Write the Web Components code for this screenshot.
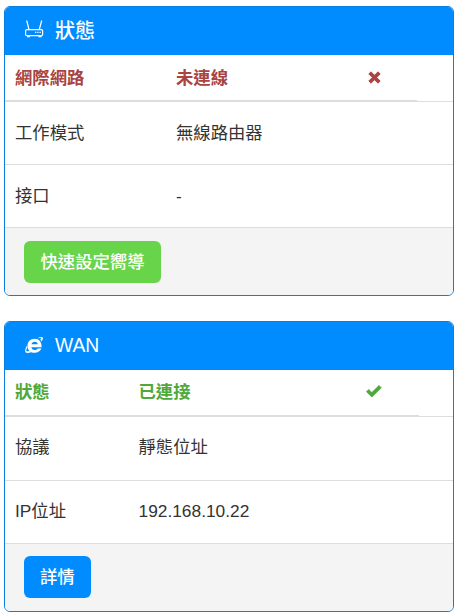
<!DOCTYPE html>
<html lang="zh-Hant">
<head>
<meta charset="utf-8">
<title>狀態</title>
<style>
body {
  margin: 0;
  padding: 6px 6px 0 4px;
  background: #fff;
  font-family: "Liberation Sans", "Noto Sans CJK TC", sans-serif;
  line-height: 20px;
  color: #333;
}
</style>
</head>
<body>
<status-panel heading="狀態" style="--heading-size:20px">
  <svg slot="icon" width="22" height="22" viewBox="0 0 22 22" fill="none" stroke="#fff" stroke-width="1.200">
    <path d="M2.700.5 5 9.500M17.700.5 15.300 9.500"/>
    <rect x="1.600" y="9.600" width="17" height="6" rx="1.200"/>
    <path d="M3 16.700h3M14.500 16.700h3"/>
    <path d="M11 12.400h1.300M13.300 12.400h1.300M15.500 12.400h1.300" stroke-width="1.400"/>
  </svg>
  <status-row label="網際網路" value="未連線" state="bad" first style="--col2:161px;--col3:192px;--line:412px"></status-row>
  <status-row label="工作模式" value="無線路由器" style="--col2:161px;--col3:192px;--lift:1px"></status-row>
  <status-row label="接口" value="-" style="--col2:161px;--col3:192px"></status-row>
  <action-button slot="footer" style="--btn:#67d44a;--pad:16.500px">快速設定嚮導</action-button>
</status-panel>
<status-panel heading="WAN" style="margin-top:25px;--heading-size:19.300px;--foot-top:12px;--foot-bottom:13px">
  <svg slot="icon" width="22" height="22" viewBox="0 0 22 22" fill="#fff">
    <path fill-rule="evenodd" d="M10.600 3.800c4.400 0 7 3 7 7.600v.9H7.400c.2 1.700 1.500 2.800 3.300 2.800 1.300 0 2.300-.5 2.900-1.500h3.800c-1 2.700-3.500 4.200-6.700 4.200-4.400 0-7.200-2.800-7.200-6.900 0-4.100 2.900-7.100 7.100-7.100zM7.500 9.300h6.300c-.2-1.600-1.400-2.600-3.100-2.600-1.700 0-2.900 1-3.200 2.600z"/>
    <path d="M13.500 3.200c2.500-1.300 4.600-1.600 5.300-.6.500.8 0 2.200-1.300 3.900-.3-.7-.7-1.300-1.200-1.800.6-.9.8-1.500.6-1.800-.3-.4-1.200-.2-2.300.3zM3 10.500c-1.600 2.900-2.300 5.500-1.500 6.800.9 1.300 3.500.9 6.500-.6-.9-.2-1.700-.5-2.400-1-1.700.7-2.800.8-3.200.3-.4-.6 0-1.800.9-3.200z"/>
  </svg>
  <status-row label="狀態" value="已連接" state="good" first style="--col2:123.500px;--col3:227.500px;--line:414px;--lift:2px"></status-row>
  <status-row label="協議" value="靜態位址" style="--col2:123.500px;--col3:227.500px;--h:63px;--lift:3px"></status-row>
  <status-row label="IP位址" value="192.168.10.22" style="--col2:123.500px;--col3:227.500px;--lift:3px"></status-row>
  <action-button slot="footer" style="--btn:#008cff;--pad:16px">詳情</action-button>
</status-panel>

<script>
// Panel with a blue heading, a list of rows and a grey footer.
const panelTemplate = document.createElement('template')
panelTemplate.innerHTML = `
<style>
:host {
  display: block;
  border: 1px solid #0a7fe0;
  border-radius: 6px;
  overflow: hidden;
  background: #fff;
}
header {
  display: flex;
  align-items: center;
  gap: 9px;
  height: 48px;
  padding-left: 19px;
  background: #008cff;
  color: #fff;
  font-size: var(--heading-size);
  font-weight: 500;
}
.icon {
  display: flex;
  width: 22px;
  height: 22px;
}
footer {
  display: flex;
  padding: var(--foot-top, 13px) 19px var(--foot-bottom, 12px);
  background: #f4f4f4;
}
</style>
<header>
  <span class="icon"><slot name="icon"></slot></span>
  <span id="heading"></span>
</header>
<slot></slot>
<footer><slot name="footer"></slot></footer>
`

customElements.define('status-panel',
  /**
   * A titled panel.
   */
  class extends HTMLElement {
    constructor () {
      super()
      this.attachShadow({ mode: 'open' })
        .appendChild(panelTemplate.content.cloneNode(true))
    }

    connectedCallback () {
      this.shadowRoot.querySelector('#heading').textContent = this.getAttribute('heading')
    }
  }
)

// One label / value line. The first row of a panel is bold and coloured.
const rowTemplate = document.createElement('template')
rowTemplate.innerHTML = `
<style>
:host {
  display: block;
  border-bottom: 1px solid #ddd;
  font-size: 17.330px;
  color: #333;
}
:host([state="bad"]) { color: #a94442; }
:host([state="good"]) { color: #4fa83a; }
:host([first]) { font-weight: bold; }
.line {
  display: grid;
  grid-template-columns: var(--col2) var(--col3) 1fr;
  align-items: center;
  height: var(--h, 62px);
  padding: 0 0 var(--lift, 0) 10px;
  box-sizing: border-box;
}
:host([first]) .line {
  width: var(--line);
  height: 47px;
  border-bottom: 2px solid #ddd;
  margin-bottom: -1px;
}
svg { display: block; }
</style>
<div class="line">
  <span id="label"></span>
  <span id="value"></span>
  <span id="mark"></span>
</div>
`

const marks = {
  bad: '<svg width="13" height="13" viewBox="0 0 13 13"><path d="M.8 3 3 .8 6.500 4.300 10 .8 12.200 3 8.700 6.500 12.200 10 10 12.200 6.500 8.700 3 12.200 .8 10 4.300 6.500z" fill="#a94442" stroke="#a94442" stroke-width="1" stroke-linejoin="round"/></svg>',
  good: '<svg width="16" height="13" viewBox="0 0 16 13"><path d="M.5 6.700 2.700 4.500 5.800 7.600 13 .5 15.200 2.700 5.800 12.100z" fill="#4fa83a" stroke="#4fa83a" stroke-width=".8" stroke-linejoin="round"/></svg>'
}

customElements.define('status-row',
  /**
   * A row of the status list.
   */
  class extends HTMLElement {
    constructor () {
      super()
      this.attachShadow({ mode: 'open' })
        .appendChild(rowTemplate.content.cloneNode(true))
    }

    connectedCallback () {
      this.shadowRoot.querySelector('#label').textContent = this.getAttribute('label')
      this.shadowRoot.querySelector('#value').textContent = this.getAttribute('value')
      const state = this.getAttribute('state')
      if (state) {
        this.shadowRoot.querySelector('#mark').innerHTML = marks[state]
      }
    }
  }
)

// Rounded footer button.
const buttonTemplate = document.createElement('template')
buttonTemplate.innerHTML = `
<style>
:host {
  display: inline-flex;
  align-items: center;
  height: 42px;
  padding: 0 var(--pad);
  border-radius: 6px;
  background: var(--btn);
  color: #fff;
  font-size: 17.330px;
  font-weight: 500;
}
</style>
<slot></slot>
`

customElements.define('action-button',
  /**
   * A coloured button.
   */
  class extends HTMLElement {
    constructor () {
      super()
      this.attachShadow({ mode: 'open' })
        .appendChild(buttonTemplate.content.cloneNode(true))
    }
  }
)
</script>
</body>
</html>
